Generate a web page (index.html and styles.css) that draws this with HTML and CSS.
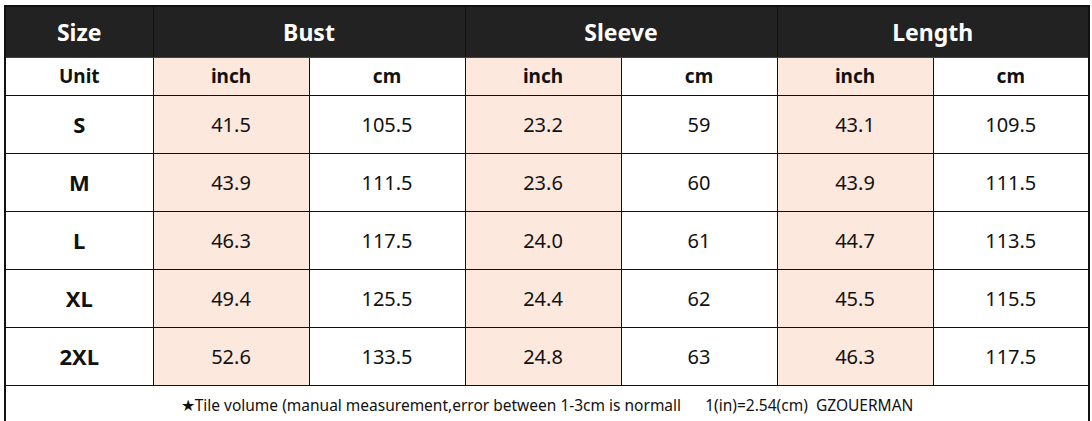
FILE: index.html
```html
<!DOCTYPE html>
<html lang="en">
<head>
    <meta charset="UTF-8">
    <title>Size chart</title>
    <link rel="stylesheet" href="styles.css">
</head>
<body>
    <table class="size-chart">
        <colgroup>
            <col class="col-size">
            <col><col><col><col><col><col>
        </colgroup>
        <thead>
            <tr class="head">
                <th>Size</th>
                <th colspan="2">Bust</th>
                <th colspan="2">Sleeve</th>
                <th colspan="2">Length</th>
            </tr>
            <tr class="unit">
                <th>Unit</th>
                <th class="inch">inch</th><th>cm</th>
                <th class="inch">inch</th><th>cm</th>
                <th class="inch">inch</th><th>cm</th>
            </tr>
        </thead>
        <tbody>
            <tr>
                <th>S</th>
                <td class="inch">41.5</td><td>105.5</td>
                <td class="inch">23.2</td><td>59</td>
                <td class="inch">43.1</td><td>109.5</td>
            </tr>
            <tr>
                <th>M</th>
                <td class="inch">43.9</td><td>111.5</td>
                <td class="inch">23.6</td><td>60</td>
                <td class="inch">43.9</td><td>111.5</td>
            </tr>
            <tr>
                <th>L</th>
                <td class="inch">46.3</td><td>117.5</td>
                <td class="inch">24.0</td><td>61</td>
                <td class="inch">44.7</td><td>113.5</td>
            </tr>
            <tr>
                <th>XL</th>
                <td class="inch">49.4</td><td>125.5</td>
                <td class="inch">24.4</td><td>62</td>
                <td class="inch">45.5</td><td>115.5</td>
            </tr>
            <tr>
                <th>2XL</th>
                <td class="inch">52.6</td><td>133.5</td>
                <td class="inch">24.8</td><td>63</td>
                <td class="inch">46.3</td><td>117.5</td>
            </tr>
            <tr class="note">
                <td colspan="7">★Tile volume (manual measurement,error between 1-3cm is normall&nbsp;&nbsp;&nbsp;&nbsp;&nbsp;&nbsp;1(in)=2.54(cm)&nbsp;&nbsp;GZOUERMAN</td>
            </tr>
        </tbody>
    </table>
</body>
</html>
```

FILE: styles.css
```css
* {
    margin: 0;
    padding: 0;
    box-sizing: border-box;
}

body {
    font-family: "Noto Sans", "Open Sans", sans-serif;
    background: white;
    color: #111;
    padding: 5px 0 0 4px;
    overflow: hidden;
}

.size-chart {
    border-collapse: collapse;
    table-layout: fixed;
    width: 1083px;
    border: 2px solid #111;
}

.size-chart col {
    width: 156px;
}

.size-chart .col-size {
    width: 148px;
}

.size-chart th,
.size-chart td {
    border: 1px solid #111;
    text-align: center;
    height: 58px;
    font-size: 20px;
    font-weight: 400;
}

.size-chart tbody th {
    font-size: 22px;
    font-weight: 700;
}

.head th {
    background: #222;
    color: white;
    font-size: 23px;
    font-weight: 700;
    height: 51px;
    border-color: #444 #111;
}

.unit th {
    height: 38px;
    font-size: 19px;
    font-weight: 700;
}

.inch {
    background: #fce8dc;
}

.size-chart .note td {
    height: 40px;
    font-size: 15.5px;
    vertical-align: top;
    padding-top: 8px;
    white-space: pre;
}
```
